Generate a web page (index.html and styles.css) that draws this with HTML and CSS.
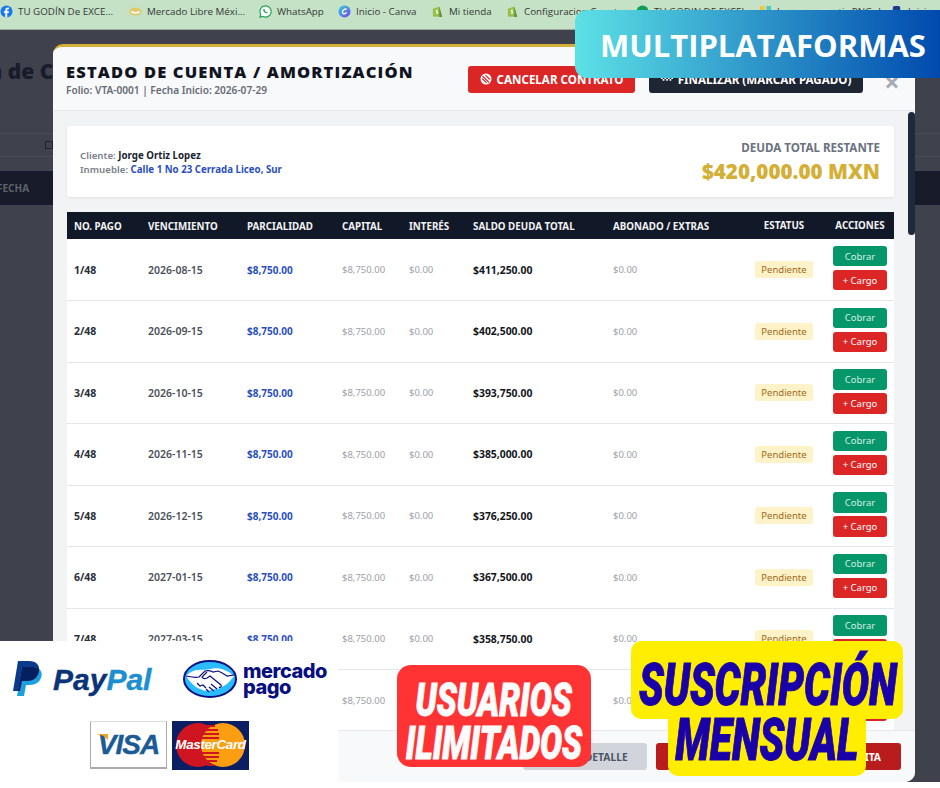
FILE: index.html
```html
<!DOCTYPE html>
<html lang="es">
<head>
    <meta charset="UTF-8">
    <meta name="viewport" content="width=device-width, initial-scale=1.0">
    <title>Estado de cuenta</title>
    <link rel="stylesheet" href="styles.css">
</head>
<body>
<div class="stage">
    <div class="bookmarks">
        <span class="bm bm-1"><svg viewBox="0 0 14 14"><circle cx="7" cy="7" r="6.5" fill="#1877f2"/><path d="M7.8 13.4V8.6h1.6l.3-2H7.8V5.5c0-.6.3-1 1-1h.9V2.800c-.4-.1-.9-.1-1.400-.1-1.600 0-2.600 1-2.600 2.600v1.300H4.200v2h1.500v4.800z" fill="#fff"/></svg>TU GODÍN De EXCE...</span>
        <span class="bm bm-2"><svg viewBox="0 0 16 14"><ellipse cx="8" cy="7" rx="7.500" ry="5" fill="#e3c766"/><path d="M3 7c3 2 7 2 10 0" fill="none" stroke="#fff" stroke-width="2"/></svg>Mercado Libre Méxi...</span>
        <span class="bm bm-3"><svg viewBox="0 0 14 14"><path d="M7 1a6 6 0 0 0-5.200 9L1 13l3.100-.8A6 6 0 1 0 7 1z" fill="#fff" stroke="#25a65a" stroke-width="1.300"/><path d="M5 4.300c-.8.700-.6 2 .5 3.200 1.200 1.300 2.600 1.800 3.400 1 .5-.5.300-.9 0-1.100-.5-.3-.8-.3-1.100.2-.7-.2-1.300-.8-1.600-1.500.5-.4.400-.7.100-1.200-.3-.4-.6-.8-1.300-.6z" fill="#25a65a"/></svg>WhatsApp</span>
        <span class="bm bm-4"><svg viewBox="0 0 14 14"><defs><linearGradient id="cv" x1="0" y1="0" x2="1" y2="1"><stop offset="0" stop-color="#2bd4d9"/><stop offset="1" stop-color="#7a3ff2"/></linearGradient></defs><circle cx="7" cy="7" r="6.500" fill="url(#cv)"/><path d="M9.300 4.800C8.700 3.800 5 4.500 4.800 7.500c-.1 2.300 2.700 2.600 4.500.6" fill="none" stroke="#fff" stroke-width="1.400"/></svg>Inicio - Canva</span>
        <span class="bm bm-5"><svg viewBox="0 0 14 14"><path d="M2 4l7-2.500L12 13l-10-.5z" fill="#95bf47"/><path d="M9 1.500L12 13l-3-.2z" fill="#5e8e3e"/><path d="M7.500 5.500c-1.500-.6-2.500.8-1 1.700 1.400.8.500 2.200-1.200 1.500" fill="none" stroke="#fff" stroke-width="1.100"/></svg>Mi tienda</span>
        <span class="bm bm-6"><svg viewBox="0 0 14 14"><path d="M2 4l7-2.500L12 13l-10-.5z" fill="#95bf47"/><path d="M9 1.500L12 13l-3-.2z" fill="#5e8e3e"/><path d="M7.500 5.500c-1.500-.6-2.500.8-1 1.700 1.400.8.500 2.200-1.200 1.500" fill="none" stroke="#fff" stroke-width="1.100"/></svg>Configuracion Cuenta</span>
        <span class="bm bm-7"><svg viewBox="0 0 14 14"><circle cx="7" cy="7" r="6.500" fill="#0f9d58"/></svg>TU GODIN DE EXCEL</span>
        <span class="bm bm-8"><svg viewBox="0 0 14 14"><rect x="1" y="1" width="5" height="5" fill="#f4c542"/><rect x="8" y="1" width="5" height="5" fill="#52c7c0"/><rect x="1" y="8" width="12" height="5" fill="#e8e8e8"/></svg>Imagenes gratis PNG de</span>
        <span class="bm bm-9"><svg viewBox="0 0 14 14"><rect x="3" y="1" width="8" height="12" rx="2" fill="#1a3c8f"/></svg>Inicio</span>
    </div>

    <div class="behind">
        <div class="behind-title">Gestión de Cobranza</div>
        <div class="behind-tools"><span class="behind-cal"></span></div>
        <div class="behind-thead">FECHA</div>
    </div>

    <div class="modal">
        <div class="modal-head">
            <div class="modal-title">
                <h2>ESTADO DE CUENTA / AMORTIZACIÓN</h2>
                <p>Folio: VTA-0001 | Fecha Inicio: 2026-07-29</p>
            </div>
            <button class="btn-head btn-cancel"><svg viewBox="0 0 12 12"><circle cx="6" cy="6" r="5.500" fill="#fff"/><path d="M2.500 3l6.500 6.500M2.200 5.500l4.300 4.300M5.500 2.200l4.300 4.300" stroke="#dc2626" stroke-width="1.100"/></svg>CANCELAR CONTRATO</button>
            <button class="btn-head btn-finish"><svg viewBox="0 0 14 8"><path d="M0 2h2v2H0zM4 2h2v2H4zM8 2h2v2H8zM12 2h2v2h-2zM2 4h2v2H2zM6 4h2v2H6zM10 4h2v2h-2z" fill="#fff"/></svg>FINALIZAR (MARCAR PAGADO)</button>
            <span class="modal-close">×</span>
        </div>

        <div class="modal-body">
            <div class="summary">
                <div class="summary-who">
                    <div>Cliente: <b>Jorge Ortiz Lopez</b></div>
                    <div>Inmueble: <b class="blue">Calle 1 No 23 Cerrada Liceo, Sur</b></div>
                </div>
                <div class="summary-debt">
                    <div class="debt-label">DEUDA TOTAL RESTANTE</div>
                    <div class="debt-value">$420,000.00 MXN</div>
                </div>
            </div>

            <table class="amort">
                <colgroup>
                    <col class="c-no"><col class="c-date"><col class="c-parc"><col class="c-cap"><col class="c-int"><col class="c-saldo"><col class="c-abono"><col class="c-status"><col class="c-act">
                </colgroup>
                <thead>
                    <tr>
                        <th>NO. PAGO</th><th>VENCIMIENTO</th><th>PARCIALIDAD</th><th>CAPITAL</th><th>INTERÉS</th><th>SALDO DEUDA TOTAL</th><th>ABONADO / EXTRAS</th><th class="center">ESTATUS</th><th class="center">ACCIONES</th>
                    </tr>
                </thead>
                <tbody>
                    <tr><td class="no">1/48</td><td class="date">2026-08-15</td><td class="parc">$8,750.00</td><td class="muted">$8,750.00</td><td class="muted">$0.00</td><td class="saldo">$411,250.00</td><td class="muted">$0.00</td><td class="center"><span class="badge">Pendiente</span></td><td class="center actions"><button class="act act-pay">Cobrar</button><button class="act act-fee">+ Cargo</button></td></tr>
                    <tr><td class="no">2/48</td><td class="date">2026-09-15</td><td class="parc">$8,750.00</td><td class="muted">$8,750.00</td><td class="muted">$0.00</td><td class="saldo">$402,500.00</td><td class="muted">$0.00</td><td class="center"><span class="badge">Pendiente</span></td><td class="center actions"><button class="act act-pay">Cobrar</button><button class="act act-fee">+ Cargo</button></td></tr>
                    <tr><td class="no">3/48</td><td class="date">2026-10-15</td><td class="parc">$8,750.00</td><td class="muted">$8,750.00</td><td class="muted">$0.00</td><td class="saldo">$393,750.00</td><td class="muted">$0.00</td><td class="center"><span class="badge">Pendiente</span></td><td class="center actions"><button class="act act-pay">Cobrar</button><button class="act act-fee">+ Cargo</button></td></tr>
                    <tr><td class="no">4/48</td><td class="date">2026-11-15</td><td class="parc">$8,750.00</td><td class="muted">$8,750.00</td><td class="muted">$0.00</td><td class="saldo">$385,000.00</td><td class="muted">$0.00</td><td class="center"><span class="badge">Pendiente</span></td><td class="center actions"><button class="act act-pay">Cobrar</button><button class="act act-fee">+ Cargo</button></td></tr>
                    <tr><td class="no">5/48</td><td class="date">2026-12-15</td><td class="parc">$8,750.00</td><td class="muted">$8,750.00</td><td class="muted">$0.00</td><td class="saldo">$376,250.00</td><td class="muted">$0.00</td><td class="center"><span class="badge">Pendiente</span></td><td class="center actions"><button class="act act-pay">Cobrar</button><button class="act act-fee">+ Cargo</button></td></tr>
                    <tr><td class="no">6/48</td><td class="date">2027-01-15</td><td class="parc">$8,750.00</td><td class="muted">$8,750.00</td><td class="muted">$0.00</td><td class="saldo">$367,500.00</td><td class="muted">$0.00</td><td class="center"><span class="badge">Pendiente</span></td><td class="center actions"><button class="act act-pay">Cobrar</button><button class="act act-fee">+ Cargo</button></td></tr>
                    <tr><td class="no">7/48</td><td class="date">2027-03-15</td><td class="parc">$8,750.00</td><td class="muted">$8,750.00</td><td class="muted">$0.00</td><td class="saldo">$358,750.00</td><td class="muted">$0.00</td><td class="center"><span class="badge">Pendiente</span></td><td class="center actions"><button class="act act-pay">Cobrar</button><button class="act act-fee">+ Cargo</button></td></tr>
                    <tr><td class="no">8/48</td><td class="date">2027-03-15</td><td class="parc">$8,750.00</td><td class="muted">$8,750.00</td><td class="muted">$0.00</td><td class="saldo">$350,000.00</td><td class="muted">$0.00</td><td class="center"><span class="badge">Pendiente</span></td><td class="center actions"><button class="act act-pay">Cobrar</button><button class="act act-fee">+ Cargo</button></td></tr>
                </tbody>
            </table>
            <span class="scroll-thumb"></span>
        </div>

        <div class="modal-foot">
            <button class="btn-foot btn-gray">CERRAR DETALLE</button>
            <button class="btn-foot btn-dark-red">PROGRAMAR COBRANZA / VISITA</button>
        </div>
    </div>

    <div class="promo-multi">MULTIPLATAFORMAS</div>

    <div class="promo-pay">
        <div class="pay-row pay-top">
            <div class="paypal">
                <svg viewBox="0 0 29 35">
                    <defs><clipPath id="ppTop"><path d="M5 0h11c7 0 11 4 10 10-1 7-6 10-12 10H9L7 30H0z"/></clipPath></defs>
                    <path d="M5 0h11c7 0 11 4 10 10-1 7-6 10-12 10H9L7 30H0z" fill="#0b3a8c"/>
                    <path d="M9 6h11c6 0 9.500 4 8.500 9-1 6-6 9-12 9h-3.500L11 35H4z" fill="#1ca0e0"/>
                    <path d="M9 6h11c6 0 9.500 4 8.500 9-1 6-6 9-12 9h-3.500L11 35H4z" fill="#04205f" clip-path="url(#ppTop)"/>
                </svg>
                <span class="pp-text"><i class="pp-a">Pay</i><i class="pp-b">Pal</i></span>
            </div>
            <div class="mpago">
                <svg viewBox="0 0 54 38">
                    <ellipse cx="27" cy="19" rx="26" ry="18" fill="#2abcff" stroke="#0a0f80" stroke-width="2"/>
                    <path d="M3 16C11 7 20 11 27 9c8-2 16 0 24 7-5 7-10 11-17 13l-10 2C15 30 8 24 3 16z" fill="#fff"/>
                    <path d="M3 16c5 1 9 2 13 1l6-6c3-1 6 0 8 1l5-1c3 1 6 3 9 5l7-1" fill="none" stroke="#0a0f80" stroke-width="1.200"/>
                    <path d="M24 12l-5 5c1 2 3 2 5 1l3-2 11 9c1 2-1 3-2 2M34 29l-6-5M31 31l-5-4M26 32l-3-3M14 23l3 3 3-1 3 3" fill="none" stroke="#0a0f80" stroke-width="1.200"/>
                </svg>
                <span class="mp-text">mercado<br>pago</span>
            </div>
        </div>
        <div class="pay-row pay-cards">
            <div class="visa"><span class="visa-flag"></span><span class="visa-text">VISA</span></div>
            <div class="mc">
                <svg viewBox="0 0 77 49"><rect width="77" height="49" fill="#0b1d63"/><circle cx="26" cy="24" r="22" fill="#cf1620"/><circle cx="51" cy="24" r="22" fill="#fb9e12"/><path d="M34 5h9M31 9h15M30 13h17M30 17h17M30 32h17M30 36h17M32 40h13M35 44h7" stroke="#cf1620" stroke-width="2"/></svg>
                <span class="mc-text">MasterCard</span>
            </div>
        </div>
    </div>

    <div class="promo-users"><span>USUARIOS</span><span>ILIMITADOS</span></div>

    <div class="promo-sub">
        <div class="sub-line sub-a"><span>SUSCRIPCIÓN</span></div>
        <div class="sub-line sub-b"><span>MENSUAL</span></div>
    </div>
</div>
</body>
</html>
```

FILE: styles.css
```css
* {
    box-sizing: border-box;
}

body {
    margin: 0;
    background-color: white;
    font-family: "Noto Sans", "Open Sans", sans-serif;
}

.stage {
    position: relative;
    width: 940px;
    height: 788px;
    overflow: hidden;
    background-color: white;
}

/* barra de marcadores */
.bookmarks {
    display: flex;
    align-items: center;
    height: 30px;
    padding-bottom: 6px;
    background-color: #c5e2c7;
    border-bottom: 1px solid #9aa59e;
    font-family: "Open Sans", sans-serif;
    font-size: 9.800px;
    color: #333835;
    white-space: nowrap;
}

.bm {
    display: flex;
    align-items: center;
    gap: 5px;
    flex: none;
}

.bm svg {
    width: 13px;
    height: 13px;
    flex: none;
}

.bm-1 { width: 129px; }
.bm-2 { width: 130px; }
.bm-3 { width: 79px; }
.bm-4 { width: 93px; }
.bm-5 { width: 75px; }
.bm-6 { width: 130px; }
.bm-7 { width: 123px; }
.bm-8 { width: 131px; }

/* pagina de atras */
.behind {
    height: 752px;
    background-color: #3f414c;
}

.behind-title {
    height: 103px;
    margin-left: -81px;
    padding-top: 26px;
    font-family: "Open Sans", sans-serif;
    font-size: 21px;
    font-weight: 800;
    line-height: 30px;
    white-space: nowrap;
    color: #191c2b;
}

.behind-tools {
    display: flex;
    align-items: center;
    height: 24px;
    padding-left: 45px;
    border-top: 1px solid #494b56;
    border-bottom: 1px solid #494b56;
}

.behind-cal {
    width: 8px;
    height: 8px;
    border: 1px solid #1f2230;
}

.behind-thead {
    height: 34px;
    margin-top: 14px;
    margin-left: -3px;
    line-height: 34px;
    font-size: 10px;
    font-weight: 700;
    color: #5f626b;
    background-color: #171b2a;
}

/* modal */
.modal {
    position: absolute;
    left: 53px;
    top: 44px;
    width: 862px;
    height: 738px;
    display: flex;
    flex-direction: column;
    overflow: hidden;
    background-color: #f1f3f5;
    border-top: 3px solid #d4af37;
    border-radius: 10px;
}

.modal-head {
    display: flex;
    align-items: center;
    height: 64px;
    padding: 1px 0 0 13px;
    flex: none;
    background-color: #f8f9fb;
    border-bottom: 1px solid #e6e8ec;
}

.modal-title {
    flex: 1;
    padding-top: 1px;
}

.modal-title h2 {
    margin: 0;
    font-family: "Open Sans", sans-serif;
    font-size: 16.500px;
    font-weight: 800;
    line-height: 20px;
    letter-spacing: 1.150px;
    color: #11141f;
}

.modal-title p {
    margin: 1px 0 0;
    font-size: 10.100px;
    font-weight: 600;
    line-height: 14px;
    color: #666b75;
}

.btn-head {
    display: flex;
    align-items: center;
    justify-content: center;
    gap: 5px;
    height: 27px;
    border: none;
    border-radius: 3px;
    font-family: "Noto Sans", sans-serif;
    font-size: 11.600px;
    font-weight: 700;
    white-space: nowrap;
    color: white;
}

.btn-head svg {
    width: 12px;
    height: 12px;
}

.btn-cancel {
    width: 167px;
    background-color: #dc2626;
}

.btn-finish {
    width: 214px;
    margin-left: 14px;
    background-color: #1e2533;
}

.modal-close {
    width: 52px;
    padding: 5px 0 0 6px;
    text-align: center;
    font-size: 27px;
    font-weight: 700;
    line-height: 27px;
    color: #a6aab2;
}

.modal-body {
    position: relative;
    flex: 1;
    overflow: hidden;
    padding: 15px 21px 0 14px;
}

.scroll-thumb {
    position: absolute;
    right: 0;
    top: 1px;
    width: 7px;
    height: 123px;
    border-radius: 4px;
    background-color: #1e293b;
}

.summary {
    display: flex;
    align-items: center;
    justify-content: space-between;
    height: 71px;
    padding: 0 14px 0 13px;
    background-color: white;
    border-radius: 3px;
    box-shadow: 0 1px 3px rgba(0, 0, 0, 0.07);
}

.summary-who {
    padding-top: 2px;
    font-size: 9.700px;
    line-height: 14px;
    font-weight: 600;
    color: #7a7f89;
}

.summary-who b {
    font-weight: 700;
    color: #20242e;
}

.summary-who b.blue {
    color: #2c4fc0;
}

.summary-debt {
    text-align: right;
}

.debt-label {
    font-size: 11.600px;
    font-weight: 700;
    line-height: 16px;
    color: #6b7280;
}

.debt-value {
    margin-top: 2px;
    font-family: "Open Sans", sans-serif;
    font-size: 20.600px;
    font-weight: 800;
    line-height: 26px;
    color: #d4af37;
}

.amort {
    width: 827px;
    margin-top: 15px;
    table-layout: fixed;
    border-collapse: collapse;
    background-color: white;
    font-size: 9.500px;
}

.c-no { width: 74px; }
.c-date { width: 99px; }
.c-parc { width: 95px; }
.c-cap { width: 67px; }
.c-int { width: 64px; }
.c-saldo { width: 140px; }
.c-abono { width: 141px; }
.c-status { width: 74px; }
.c-act { width: 73px; }

.amort th {
    height: 27px;
    padding: 1px 0 0 7px;
    text-align: left;
    font-size: 9.800px;
    font-weight: 700;
    white-space: nowrap;
    color: #f1f2f4;
    background-color: #111827;
}

.amort td {
    height: 61.500px;
    padding: 0 0 0 7px;
    border-bottom: 1px solid #e5e7eb;
    white-space: nowrap;
}

.amort th.center,
.amort td.center {
    padding: 0;
    text-align: center;
}

.amort td:last-child,
.amort th:last-child {
    padding-left: 5px;
}

.amort td.actions {
    padding-bottom: 3px;
}

.no {
    font-size: 10.500px;
    font-weight: 700;
    color: #2a2e38;
}

.date {
    font-size: 10.500px;
    font-weight: 600;
    color: #4b505a;
}

.parc {
    font-size: 10px;
    font-weight: 700;
    color: #2c4fc0;
}

.muted {
    color: #9ca0a8;
}

.saldo {
    font-size: 10.400px;
    font-weight: 700;
    color: #14161d;
}

.badge {
    display: inline-block;
    width: 58px;
    height: 17px;
    border-radius: 3px;
    line-height: 17px;
    color: #a16b20;
    background-color: #fdf2c8;
}

.act {
    display: block;
    width: 54px;
    height: 20.500px;
    margin: 0 auto;
    padding: 0;
    border: none;
    border-radius: 3px;
    font-family: "Noto Sans", sans-serif;
    font-size: 9.500px;
    color: white;
}

.act-pay {
    background-color: #059669;
    color: #d7efe6;
}

.act-fee {
    margin-top: 3.500px;
    background-color: #dc2626;
}

.modal-foot {
    display: flex;
    align-items: center;
    justify-content: flex-end;
    gap: 9px;
    height: 52px;
    flex: none;
    padding: 0 14px 0 0;
    background-color: #f8f9fb;
    border-top: 1px solid #e6e8ec;
}

.btn-foot {
    height: 27px;
    border: none;
    border-radius: 3px;
    font-family: "Noto Sans", sans-serif;
    font-size: 10.300px;
    font-weight: 700;
    white-space: nowrap;
}

.btn-gray {
    width: 124px;
    color: #4b5563;
    background-color: #d1d5db;
}

.btn-dark-red {
    width: 245px;
    padding: 0 20px 0 0;
    text-align: right;
    color: white;
    background-color: #b91c1c;
}

/* piezas de publicidad encima de la captura */
.promo-multi {
    position: absolute;
    left: 575px;
    top: 10px;
    width: 365px;
    height: 68px;
    padding-left: 25px;
    border-radius: 12px 0 0 12px;
    font-family: "Open Sans", sans-serif;
    font-size: 31px;
    font-weight: 700;
    line-height: 70px;
    white-space: nowrap;
    color: white;
    background: linear-gradient(90deg, #5ce1e6, #004aad);
}

.promo-pay {
    position: absolute;
    left: 0;
    top: 641px;
    width: 338px;
    height: 147px;
    background-color: white;
}

.pay-row {
    display: flex;
}

.pay-top {
    align-items: center;
    height: 80px;
    padding: 0 0 5px 13px;
}

.paypal {
    display: flex;
    align-items: center;
    gap: 11px;
    width: 170px;
}

.paypal svg {
    width: 29px;
    height: 35px;
    flex: none;
}

.pp-text {
    padding-top: 2px;
    font-family: "Liberation Sans", sans-serif;
    font-size: 30px;
    font-weight: 700;
    -webkit-text-stroke: 0.4px currentColor;
}

.pp-a {
    color: #0b3478;
}

.pp-b {
    color: #1b8fcf;
}

.mpago {
    display: flex;
    align-items: center;
    gap: 6px;
}

.mpago svg {
    width: 54px;
    height: 38px;
    flex: none;
}

.mp-text {
    font-family: "Inter", sans-serif;
    font-size: 20px;
    font-weight: 800;
    line-height: 16px;
    letter-spacing: -0.5px;
    color: #0a0f80;
}

.pay-cards {
    gap: 5px;
    padding-left: 90px;
}

.visa {
    position: relative;
    width: 77px;
    height: 48px;
    border: 1px solid #aaa;
    border-top-color: #ddd;
    border-bottom-width: 2px;
    text-align: center;
}

.visa-flag {
    position: absolute;
    left: 5px;
    top: 12px;
    width: 12px;
    height: 6px;
    background-color: #f2a81d;
    clip-path: polygon(0 0, 100% 0, 100% 100%, 60% 30%);
}

.visa-text {
    font-family: "Liberation Sans", sans-serif;
    font-size: 28px;
    font-style: italic;
    font-weight: 700;
    line-height: 46px;
    letter-spacing: -1px;
    color: #1a5a96;
    -webkit-text-stroke: 0.4px currentColor;
}

.mc {
    position: relative;
    width: 77px;
    height: 49px;
}

.mc svg {
    display: block;
    width: 77px;
    height: 49px;
}

.mc-text {
    position: absolute;
    left: 0;
    right: 0;
    top: 16px;
    text-align: center;
    font-family: "Liberation Sans", sans-serif;
    font-size: 13.500px;
    font-style: italic;
    font-weight: 700;
    letter-spacing: -0.4px;
    color: white;
}

.promo-users {
    position: absolute;
    left: 397px;
    top: 665px;
    width: 194px;
    height: 102px;
    display: flex;
    flex-direction: column;
    align-items: center;
    padding-top: 13px;
    border-radius: 14px;
    font-family: "Roboto", sans-serif;
    font-size: 47px;
    font-style: italic;
    font-weight: 900;
    line-height: 43px;
    white-space: nowrap;
    color: #fbfbfb;
    background-color: #ff3333;
    -webkit-text-stroke: 1px currentColor;
}

.promo-users span {
    flex: none;
    transform: scaleX(0.7);
}

.promo-sub {
    position: absolute;
    left: 631px;
    top: 641px;
    width: 272px;
    display: flex;
    flex-direction: column;
    align-items: center;
    font-family: "Roboto", sans-serif;
    font-style: italic;
    font-weight: 900;
    font-size: 59px;
    white-space: nowrap;
    color: #1a00a8;
    -webkit-text-stroke: 1px currentColor;
}

.sub-line {
    display: flex;
    justify-content: center;
    background-color: #ffee00;
    border-radius: 10px;
}

.sub-line span {
    flex: none;
    transform: scaleX(0.69);
}

.sub-a {
    width: 272px;
    height: 78px;
    padding-left: 2px;
    line-height: 88px;
}

.sub-b {
    width: 198px;
    height: 57px;
    line-height: 42px;
    border-radius: 0 0 10px 10px;
}
```
